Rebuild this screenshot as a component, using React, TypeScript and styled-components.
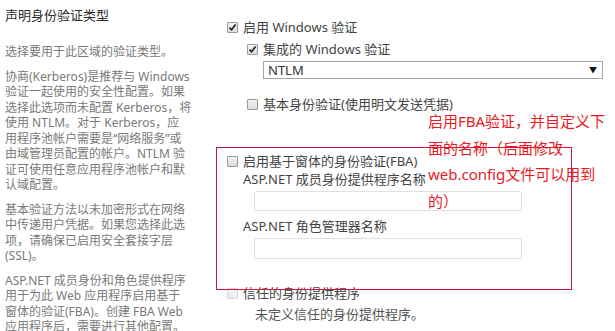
import React from "react";
import styled, { createGlobalStyle } from "styled-components";

const GlobalStyle = createGlobalStyle`
  html, body {
    margin: 0;
    padding: 0;
    background: #fff;
  }
  body {
    font-family: "Noto Sans", "Noto Sans CJK SC", sans-serif;
  }
`;

const Page = styled.div`
  position: relative;
  width: 615px;
  height: 331px;
  overflow: hidden;
  display: flex;
`;

const Side = styled.div`
  width: 227px;
  flex: none;
  padding: 6px 0 0 5px;
  box-sizing: border-box;
`;

const SideTitle = styled.div`
  font-size: 13px;
  line-height: 18px;
  color: #2b2b2b;
  margin-bottom: 20px;
`;

const SideText = styled.p`
  margin: 0 0 9px;
  font-size: 12px;
  line-height: 15.5px;
  color: #7a7a7a;
  white-space: nowrap;
`;

const Main = styled.div`
  flex: 1;
  padding-top: 19px;
  font-size: 13px;
  color: #444;
`;

const Row = styled.div<{ $indent?: number; $top?: number }>`
  display: flex;
  align-items: center;
  gap: 5px;
  height: 17px;
  line-height: 17px;
  margin-left: ${(p) => p.$indent ?? 0}px;
  margin-top: ${(p) => p.$top ?? 0}px;
  white-space: nowrap;
`;

const Box = styled.span<{ $checked?: boolean; $disabled?: boolean }>`
  width: 11px;
  height: 11px;
  flex: none;
  box-sizing: border-box;
  border: 1px solid ${(p) => (p.$disabled ? "#d8d8d8" : "#9a9a9a")};
  border-radius: 1px;
  background: ${(p) =>
    p.$disabled
      ? "linear-gradient(#f4f4f4, #ececec)"
      : "linear-gradient(#f3f3f3, #dcdcdc)"};
  display: flex;
  align-items: center;
  justify-content: center;
`;

const Label = styled.div<{ $indent?: number; $top?: number }>`
  font-size: 13px;
  line-height: 17px;
  color: #444;
  margin-left: ${(p) => p.$indent ?? 0}px;
  margin-top: ${(p) => p.$top ?? 0}px;
  white-space: nowrap;
`;

const Note = styled(Label)`
  color: #555;
`;

const Select = styled.div`
  margin: 3px 0 0 36px;
  width: 340px;
  height: 18px;
  box-sizing: border-box;
  border: 1px solid #a6a6a6;
  display: flex;
  align-items: center;
  justify-content: space-between;
  padding: 0 5px 0 4px;
  font-size: 13px;
  color: #333;
`;

const Arrow = styled.span`
  font-size: 8px;
  color: #111;
  line-height: 1;
`;

const TextInput = styled.div<{ $top: number; $height: number }>`
  margin: ${(p) => p.$top}px 0 0 27px;
  width: 268px;
  height: ${(p) => p.$height}px;
  box-sizing: border-box;
  border: 1px solid #e1e1e1;
  border-radius: 2px;
  background: #fff;
`;

const Frame = styled.div`
  position: absolute;
  left: 216px;
  top: 147px;
  width: 356px;
  height: 143px;
  box-sizing: border-box;
  border: 1px solid #c8173f;
  pointer-events: none;
`;

const Remark = styled.div`
  position: absolute;
  left: 428px;
  top: 108px;
  font-size: 15px;
  line-height: 26.5px;
  color: #e8191f;
  white-space: nowrap;
`;

const Check: React.FC<{ checked?: boolean; disabled?: boolean }> = ({
  checked,
  disabled,
}) => (
  <Box $checked={checked} $disabled={disabled}>
    {checked && (
      <svg width="9" height="9" viewBox="0 0 9 9">
        <path
          d="M1.5 4.6 L3.6 6.8 L7.6 1.6"
          fill="none"
          stroke="#222"
          strokeWidth="1.7"
        />
      </svg>
    )}
  </Box>
);

const sideParagraphs = [
  ["选择要用于此区域的验证类型。"],
  [
    "协商(Kerberos)是推荐与 Windows",
    "验证一起使用的安全性配置。如果",
    "选择此选项而未配置 Kerberos，将",
    "使用 NTLM。对于 Kerberos，应",
    "用程序池帐户需要是“网络服务”或",
    "由域管理员配置的帐户。NTLM 验",
    "证可使用任意应用程序池帐户和默",
    "认域配置。",
  ],
  [
    "基本验证方法以未加密形式在网络",
    "中传递用户凭据。如果您选择此选",
    "项，请确保已启用安全套接字层",
    "(SSL)。",
  ],
  [
    "ASP.NET 成员身份和角色提供程序",
    "用于为此 Web 应用程序启用基于",
    "窗体的验证(FBA)。创建 FBA Web",
    "应用程序后，需要进行其他配置。",
  ],
];

const remarkLines = [
  "启用FBA验证，并自定义下",
  "面的名称（后面修改",
  "web.config文件可以用到",
  "的）",
];

export default function App() {
  return (
    <Page>
      <GlobalStyle />
      <Side>
        <SideTitle>声明身份验证类型</SideTitle>
        {sideParagraphs.map((lines, i) => (
          <SideText key={i}>
            {lines.map((l, j) => (
              <React.Fragment key={j}>
                {j > 0 && <br />}
                {l}
              </React.Fragment>
            ))}
          </SideText>
        ))}
      </Side>

      <Main>
        <Row>
          <Check checked />
          启用 Windows 验证
        </Row>
        <Row $indent={20} $top={5}>
          <Check checked />
          集成的 Windows 验证
        </Row>
        <Select>
          NTLM
          <Arrow>▼</Arrow>
        </Select>
        <Row $indent={20} $top={17}>
          <Check />
          基本身份验证(使用明文发送凭据)
        </Row>

        <Row $top={40}>
          <Check />
          启用基于窗体的身份验证(FBA)
        </Row>
        <Label $indent={16} $top={1}>
          ASP.NET 成员身份提供程序名称
        </Label>
        <TextInput $top={3} $height={20} />
        <Label $indent={16} $top={7}>
          ASP.NET 角色管理器名称
        </Label>
        <TextInput $top={3} $height={21} />

        <Row $top={26}>
          <Check disabled />
          信任的身份提供程序
        </Row>
        <Note $indent={28} $top={4}>
          未定义信任的身份提供程序。
        </Note>
      </Main>

      <Frame />
      <Remark>
        {remarkLines.map((l, i) => (
          <div key={i}>{l}</div>
        ))}
      </Remark>
    </Page>
  );
}
